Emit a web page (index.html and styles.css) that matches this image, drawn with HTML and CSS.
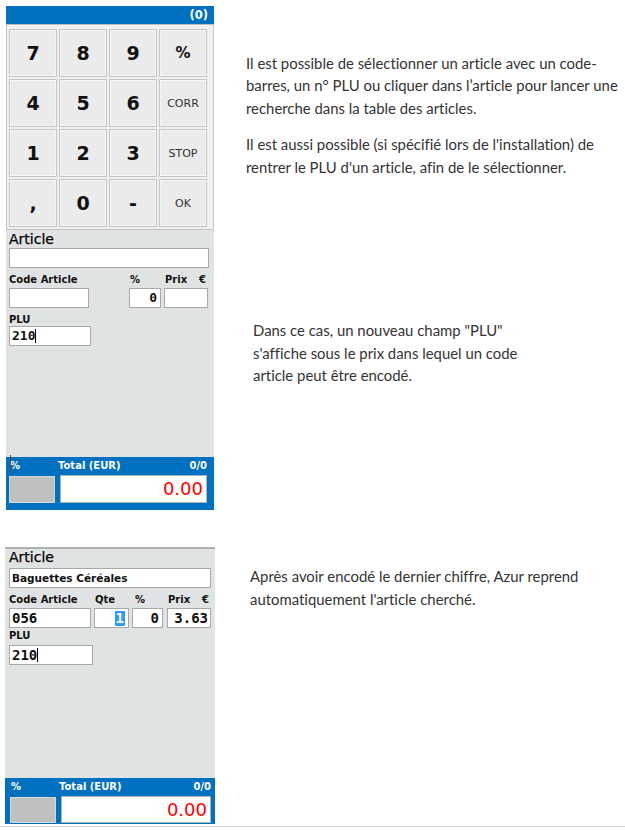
FILE: index.html
```html
<!DOCTYPE html>
<html lang="fr">
<head>
<meta charset="utf-8">
<title>PLU</title>
<link rel="stylesheet" href="styles.css">
</head>
<body>
<div class="page">
  <section class="row row-top">
    <div class="pos pos-a">
      <div class="pos-head">(0)</div>
      <div class="keypad">
        <div class="key num">7</div>
        <div class="key num">8</div>
        <div class="key num">9</div>
        <div class="key sym">%</div>
        <div class="key num">4</div>
        <div class="key num">5</div>
        <div class="key num">6</div>
        <div class="key word">CORR</div>
        <div class="key num">1</div>
        <div class="key num">2</div>
        <div class="key num">3</div>
        <div class="key word">STOP</div>
        <div class="key num">,</div>
        <div class="key num">0</div>
        <div class="key num">-</div>
        <div class="key word">OK</div>
      </div>
      <div class="form form-a">
        <div class="lbl-big">Article</div>
        <div class="inp inp-article"></div>
        <div class="fields">
          <div class="field f-code"><div class="lbl">Code Article</div><div class="inp"></div></div>
          <div class="field f-pct"><div class="lbl">%</div><div class="inp val right">0</div></div>
          <div class="field f-prix"><div class="lbl split"><span>Prix</span><span>€</span></div><div class="inp"></div></div>
        </div>
        <div class="lbl plu-lbl">PLU</div>
        <div class="inp val inp-plu">210<span class="caret"></span></div>
      </div>
      <div class="totbar">
        <div class="tot-labels"><span class="tl-pct">%<span class="cursor"></span></span><span class="tl-total">Total (EUR)</span><span class="tl-count">0/0</span></div>
        <div class="tot-boxes"><div class="tot-gray"></div><div class="tot-val">0.00</div></div>
      </div>
    </div>
    <div class="notes notes-a">
      <p>Il est possible de sélectionner un article avec un code-<br>barres, un n° PLU ou cliquer dans l’article pour lancer une<br>recherche dans la table des articles.</p>
      <p class="p-second">Il est aussi possible (si spécifié lors de l'installation) de<br>rentrer le PLU d'un article, afin de le sélectionner.</p>
      <p class="p-plu">Dans ce cas, un nouveau champ "PLU"<br>s'affiche sous le prix dans lequel un code<br>article peut être encodé.</p>
    </div>
  </section>

  <section class="row row-bottom">
    <div class="pos pos-b">
      <div class="form form-b">
        <div class="lbl-big">Article</div>
        <div class="inp inp-article name">Baguettes Céréales</div>
        <div class="fields">
          <div class="field f-code"><div class="lbl">Code Article</div><div class="inp val">056</div></div>
          <div class="field f-qte"><div class="lbl">Qte</div><div class="inp val right"><span class="sel">1</span></div></div>
          <div class="field f-pct"><div class="lbl">%</div><div class="inp val right">0</div></div>
          <div class="field f-prix"><div class="lbl split"><span>Prix</span><span>€</span></div><div class="inp val right">3.63</div></div>
        </div>
        <div class="lbl plu-lbl">PLU</div>
        <div class="inp val inp-plu">210<span class="caret"></span></div>
      </div>
      <div class="totbar">
        <div class="tot-labels"><span class="tl-pct">%</span><span class="tl-total">Total (EUR)</span><span class="tl-count">0/0</span></div>
        <div class="tot-boxes"><div class="tot-gray"></div><div class="tot-val">0.00</div></div>
      </div>
    </div>
    <div class="notes notes-b">
      <p>Après avoir encodé le dernier chiffre, Azur reprend<br>automatiquement l'article cherché.</p>
    </div>
  </section>
  <div class="rule"></div>
</div>
</body>
</html>
```

FILE: styles.css
```css
* { box-sizing: border-box; }

html, body {
  margin: 0;
  padding: 0;
  background: #ffffff;
}

.page {
  width: 625px;
  font-family: "DejaVu Sans", sans-serif;
  color: #111;
}

.row {
  display: flex;
  align-items: flex-start;
}

.row-top {
  padding: 6px 0 0 6px;
}

.row-bottom {
  padding: 0 0 0 5px;
  margin-top: 37px;
}

/* ---------- POS panel ---------- */
.pos {
  display: flex;
  flex-direction: column;
}

.pos-a { width: 208px; }
.pos-b { width: 210px; }

.pos-head {
  height: 18px;
  background: #0070c0;
  color: #fff;
  font-weight: bold;
  font-size: 11.5px;
  line-height: 18px;
  text-align: right;
  padding-right: 6px;
}

.keypad {
  height: 206px;
  background: #f0f0f0;
  border: 1px solid #c4c4c4;
  border-top: 1px solid #bcbcbc;
  padding: 4px 4px 0 2px;
  display: grid;
  grid-template-columns: repeat(4, 48px);
  grid-template-rows: repeat(4, 48px);
  gap: 2px;
}

.key {
  background: #ebebeb;
  border: 1px solid #c4c4c4;
  box-shadow: inset 0 0 0 1px #f6f6f6;
  display: flex;
  align-items: center;
  justify-content: center;
  color: #111;
}

.key.num {
  font-size: 19px;
  font-weight: bold;
}

.key.sym {
  font-size: 15px;
  font-weight: bold;
}

.key.word {
  font-size: 11px;
  color: #333;
}

/* ---------- form ---------- */
.form {
  background: #e0e3e3;
  display: flex;
  flex-direction: column;
  align-items: flex-start;
}

.form-a {
  height: 227px;
  padding: 1px 0 0 3px;
}

.form-b {
  height: 231px;
  border-top: 2px solid #aeb0b0;
  padding: 0 0 0 4px;
}

.lbl-big {
  font-size: 14px;
  line-height: 16px;
  height: 16px;
  color: #000;
  -webkit-text-stroke: 0.25px #000;
}

.lbl {
  font-size: 10px;
  font-weight: bold;
  line-height: 12px;
  height: 12px;
  color: #111;
  white-space: nowrap;
}

.lbl.split {
  display: flex;
  justify-content: space-between;
  padding-left: 1px;
  padding-right: 2px;
}

.inp {
  height: 20px;
  background: #fff;
  border: 1px solid #a8a8a8;
  font-family: "DejaVu Sans Mono", monospace;
  font-weight: bold;
  font-size: 13px;
  line-height: 18px;
  padding: 0 2px;
  color: #111;
  white-space: nowrap;
  display: flex;
  align-items: center;
}

.inp.right {
  justify-content: flex-end;
  padding-right: 3px;
}

.inp-article {
  align-self: stretch;
}

.form-a .inp-article { margin: 1px 5px 0 0; }
.form-b .inp-article { margin: 3px 4px 0 0; }

.inp.name {
  font-family: "DejaVu Sans", sans-serif;
  font-size: 10.5px;
  padding-left: 2px;
}

.fields {
  display: flex;
  align-items: flex-start;
}

.form-a .fields { margin-top: 6px; }
.form-b .fields { margin-top: 6px; }

.field {
  display: flex;
  flex-direction: column;
}

.field .inp { margin-top: 2px; }

.form-a .f-code { width: 80px; }
.form-a .f-pct { width: 32px; margin-left: 40px; }
.form-a .f-pct .lbl { padding-left: 1px; }
.form-a .f-prix { width: 44px; margin-left: 3px; }

.form-b .val { font-size: 14px; }
.form-b .f-code { width: 82px; }
.form-b .f-qte { width: 35px; margin-left: 3px; }
.form-b .f-qte .lbl { padding-left: 1px; }
.form-b .f-pct { width: 31px; margin-left: 3px; }
.form-b .f-pct .lbl { padding-left: 3px; }
.form-b .f-prix { width: 44px; margin-left: 4px; }
.form-b .f-prix .inp { padding-right: 2px; }

.sel {
  background: #3399ff;
  color: #fff;
  padding: 0 1px;
  line-height: 15px;
}

.form-a .plu-lbl { margin-top: 6px; }
.form-b .plu-lbl { margin-top: 2px; }

.inp-plu { width: 82px; }
.form-a .inp-plu { margin-top: 0; }
.form-b .inp-plu { margin-top: 3px; width: 84px; }

.caret {
  display: inline-block;
  width: 1px;
  height: 14px;
  background: #000;
  margin-left: 0;
}

/* ---------- total bar ---------- */
.totbar {
  background: #0070c0;
  color: #fff;
  display: flex;
  flex-direction: column;
}

.pos-a .totbar { height: 53px; padding: 3px 7px 0 3px; }
.pos-b .totbar { height: 46px; padding: 3px 4px 0 5px; }

.tot-labels {
  display: flex;
  font-size: 10px;
  font-weight: bold;
  line-height: 12px;
  height: 12px;
}

.tl-pct {
  width: 49px;
  padding-left: 1px;
  position: relative;
}

.cursor {
  position: absolute;
  left: 1px;
  top: -5px;
  width: 1px;
  height: 17px;
  background: #6b4a2a;
}

.tl-total { flex: 1; }

.tot-boxes {
  display: flex;
  align-items: center;
  margin-top: 3px;
}

.pos-a .tot-boxes { height: 28px; }
.pos-b .tot-boxes { height: 27px; }

.tot-gray {
  width: 46px;
  background: #c0c0c0;
  border: 1px solid #d8d8d8;
}

.pos-a .tot-gray { height: 27px; }
.pos-b .tot-gray { height: 26px; }

.tot-val {
  flex: 1;
  margin-left: 5px;
  height: 100%;
  background: #fff;
  border: 1px solid #b0b0b0;
  color: #ff0000;
  font-size: 18px;
  line-height: 1;
  display: flex;
  align-items: center;
  justify-content: flex-end;
  padding-right: 3px;
}

/* ---------- notes ---------- */
.notes {
  font-family: Lato, "Open Sans", sans-serif;
  font-size: 14.9px;
  line-height: 22.5px;
  color: #333;
  white-space: nowrap;
  font-variant-ligatures: none;
}

.notes p { margin: 0; }

.notes-a {
  margin-left: 32px;
  margin-top: 45.5px;
}

.notes-a .p-second { margin-top: 14px; }

.notes-a .p-plu {
  margin-top: 141px;
  margin-left: 7px;
}

.notes-b {
  margin-left: 35px;
  margin-top: 18px;
}

.rule {
  height: 1px;
  margin-top: 2px;
  background: #d6d6d6;
  width: 625px;
}
```
